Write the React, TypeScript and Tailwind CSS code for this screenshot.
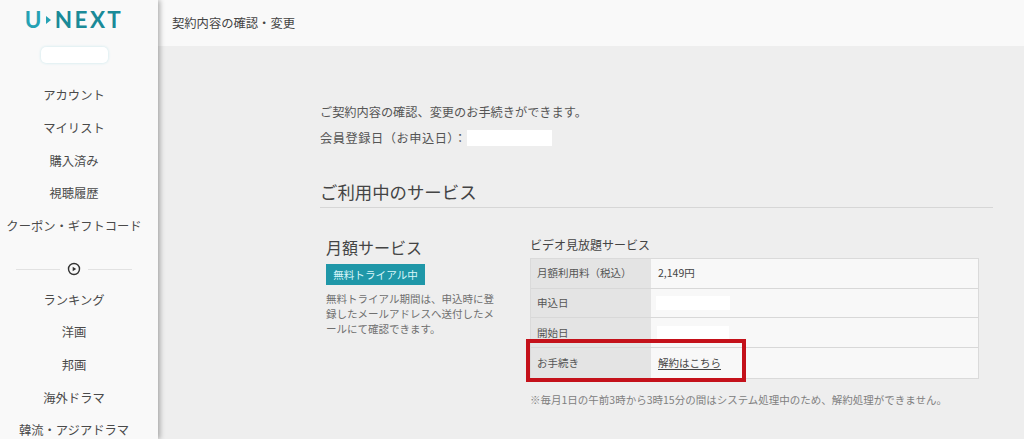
import React from "react";

const font = { fontFamily: '"Noto Sans CJK JP", "Noto Sans", sans-serif' };

const topNav = ["アカウント", "マイリスト", "購入済み", "視聴履歴", "クーポン・ギフトコード"];
const genreNav = ["ランキング", "洋画", "邦画", "海外ドラマ", "韓流・アジアドラマ"];

function NavItem({ label }: { label: string }) {
  return (
    <div className="h-[32.7px] flex items-center justify-center text-[12.3px] text-[#4a4a4a] whitespace-nowrap">
      {label}
    </div>
  );
}

function Row({ label, children, last }: { label: string; children: React.ReactNode; last?: boolean }) {
  return (
    <div className={`flex h-[29.7px] ${last ? "" : "border-b border-[#d8d8d8]"}`}>
      <div className="w-[120px] shrink-0 bg-[#e4e4e4] pl-[6px] flex items-center text-[10.5px] text-[#555]">{label}</div>
      <div className="flex-1 bg-[#f8f8f8] pl-[7px] flex items-center text-[10.5px] text-[#444]">{children}</div>
    </div>
  );
}

export default function App() {
  return (
    <div className="flex w-[1024px] h-[439px] overflow-hidden bg-[#eeeeee]" style={font}>
      <aside className="w-[158px] shrink-0 h-full bg-[#f9f9f9] shadow-[2px_0_5px_rgba(0,0,0,0.3)] z-10 overflow-hidden">
        <div className="w-[148px] flex flex-col items-center">
          <div className="h-[47px] pt-[6px] flex items-start justify-center">
            <div className="flex items-center text-[22.5px] leading-[28px] font-bold tracking-[2.4px] text-[#25a2b4]" style={{ fontFamily: '"Lato", sans-serif' }}>
              <span>U</span>
              <svg width="5" height="8" viewBox="0 0 5 8" className="ml-[2px] mr-[4px]">
                <path d="M0 0 L5 4 L0 8 Z" fill="#25a2b4" />
              </svg>
              <span className="text-[#1a8a98]">NEXT</span>
            </div>
          </div>
          <div className="w-[67px] h-[16px] rounded-[5px] bg-white shadow-[0_0_3px_#c4e6ec]" />
          <nav className="mt-[16px] w-full">
            {topNav.map((l) => (
              <NavItem key={l} label={l} />
            ))}
          </nav>
          <div className="mt-[20px] mb-[7px] flex items-center gap-[7px] w-[116px]">
            <div className="flex-1 h-px bg-[#e2e2e2]" />
            <svg width="14" height="14" viewBox="0 0 14 14">
              <circle cx="7" cy="7" r="5.5" fill="none" stroke="#333" strokeWidth="1.4" />
              <path d="M5.7 4.8 L9.2 7 L5.7 9.2 Z" fill="#333" />
            </svg>
            <div className="flex-1 h-px bg-[#e2e2e2]" />
          </div>
          <nav className="w-full">
            {genreNav.map((l) => (
              <NavItem key={l} label={l} />
            ))}
          </nav>
        </div>
      </aside>

      <div className="flex-1 min-w-0 flex flex-col">
        <header className="h-[46px] bg-[#f9f9f9] pl-[14px] flex items-center text-[12.3px] text-[#444]">
          契約内容の確認・変更
        </header>
        <main className="flex-1 pl-[162px] pr-[31px] pt-[56px]">
          <p className="text-[12.2px] leading-[20px] text-[#555]">ご契約内容の確認、変更のお手続きができます。</p>
          <div className="mt-[8px] flex items-center text-[12.2px] h-[16px] text-[#555]">
            <span className="w-[147px] whitespace-nowrap tracking-[0.55px]">会員登録日（お申込日）：</span>
            <span className="w-[85px] h-[16px] bg-white" />
          </div>
          <h2 className="mt-[33px] pb-[2px] border-b border-[#d6d6d6] text-[17.4px] leading-[26px] font-normal text-[#444]">
            ご利用中のサービス
          </h2>
          <div className="mt-[27px] flex">
            <section className="w-[210px] shrink-0 pl-[6px]">
              <h3 className="text-[16px] leading-[24px] text-[#444]">月額サービス</h3>
              <div className="mt-[5px] w-[99px] h-[21px] bg-[#1f97a8] flex items-center justify-center text-[10.6px] text-[#d9f6fa]">
                無料トライアル中
              </div>
              <p className="mt-[6px] w-[172px] text-[10.5px] leading-[15px] text-[#707070] break-all">
                無料トライアル期間は、申込時に登録したメールアドレスへ送付したメールにて確認できます。
              </p>
            </section>
            <section className="w-[449px] shrink-0">
              <h4 className="text-[12px] leading-[18px] text-[#444] mt-[1px]">ビデオ見放題サービス</h4>
              <div className="relative mt-[4px]">
                <div className="border border-[#dadada]">
                  <Row label="月額利用料（税込）">2,149円</Row>
                  <Row label="申込日">
                    <span className="w-[74px] h-[14px] bg-white -ml-[2px]" />
                  </Row>
                  <Row label="開始日">
                    <span className="w-[72px] h-[14px] bg-white -ml-[1px]" />
                  </Row>
                  <Row label="お手続き" last>
                    <span className="underline underline-offset-2">解約はこちら</span>
                  </Row>
                </div>
                <div className="absolute left-[-4px] top-[81px] w-[220px] h-[43px] border-[4px] border-[#c4111a]" />
              </div>
              <p className="mt-[13px] text-[10.5px] leading-[16px] text-[#808080] whitespace-nowrap">
                ※毎月1日の午前3時から3時15分の間はシステム処理中のため、解約処理ができません。
              </p>
            </section>
          </div>
        </main>
      </div>
    </div>
  );
}
